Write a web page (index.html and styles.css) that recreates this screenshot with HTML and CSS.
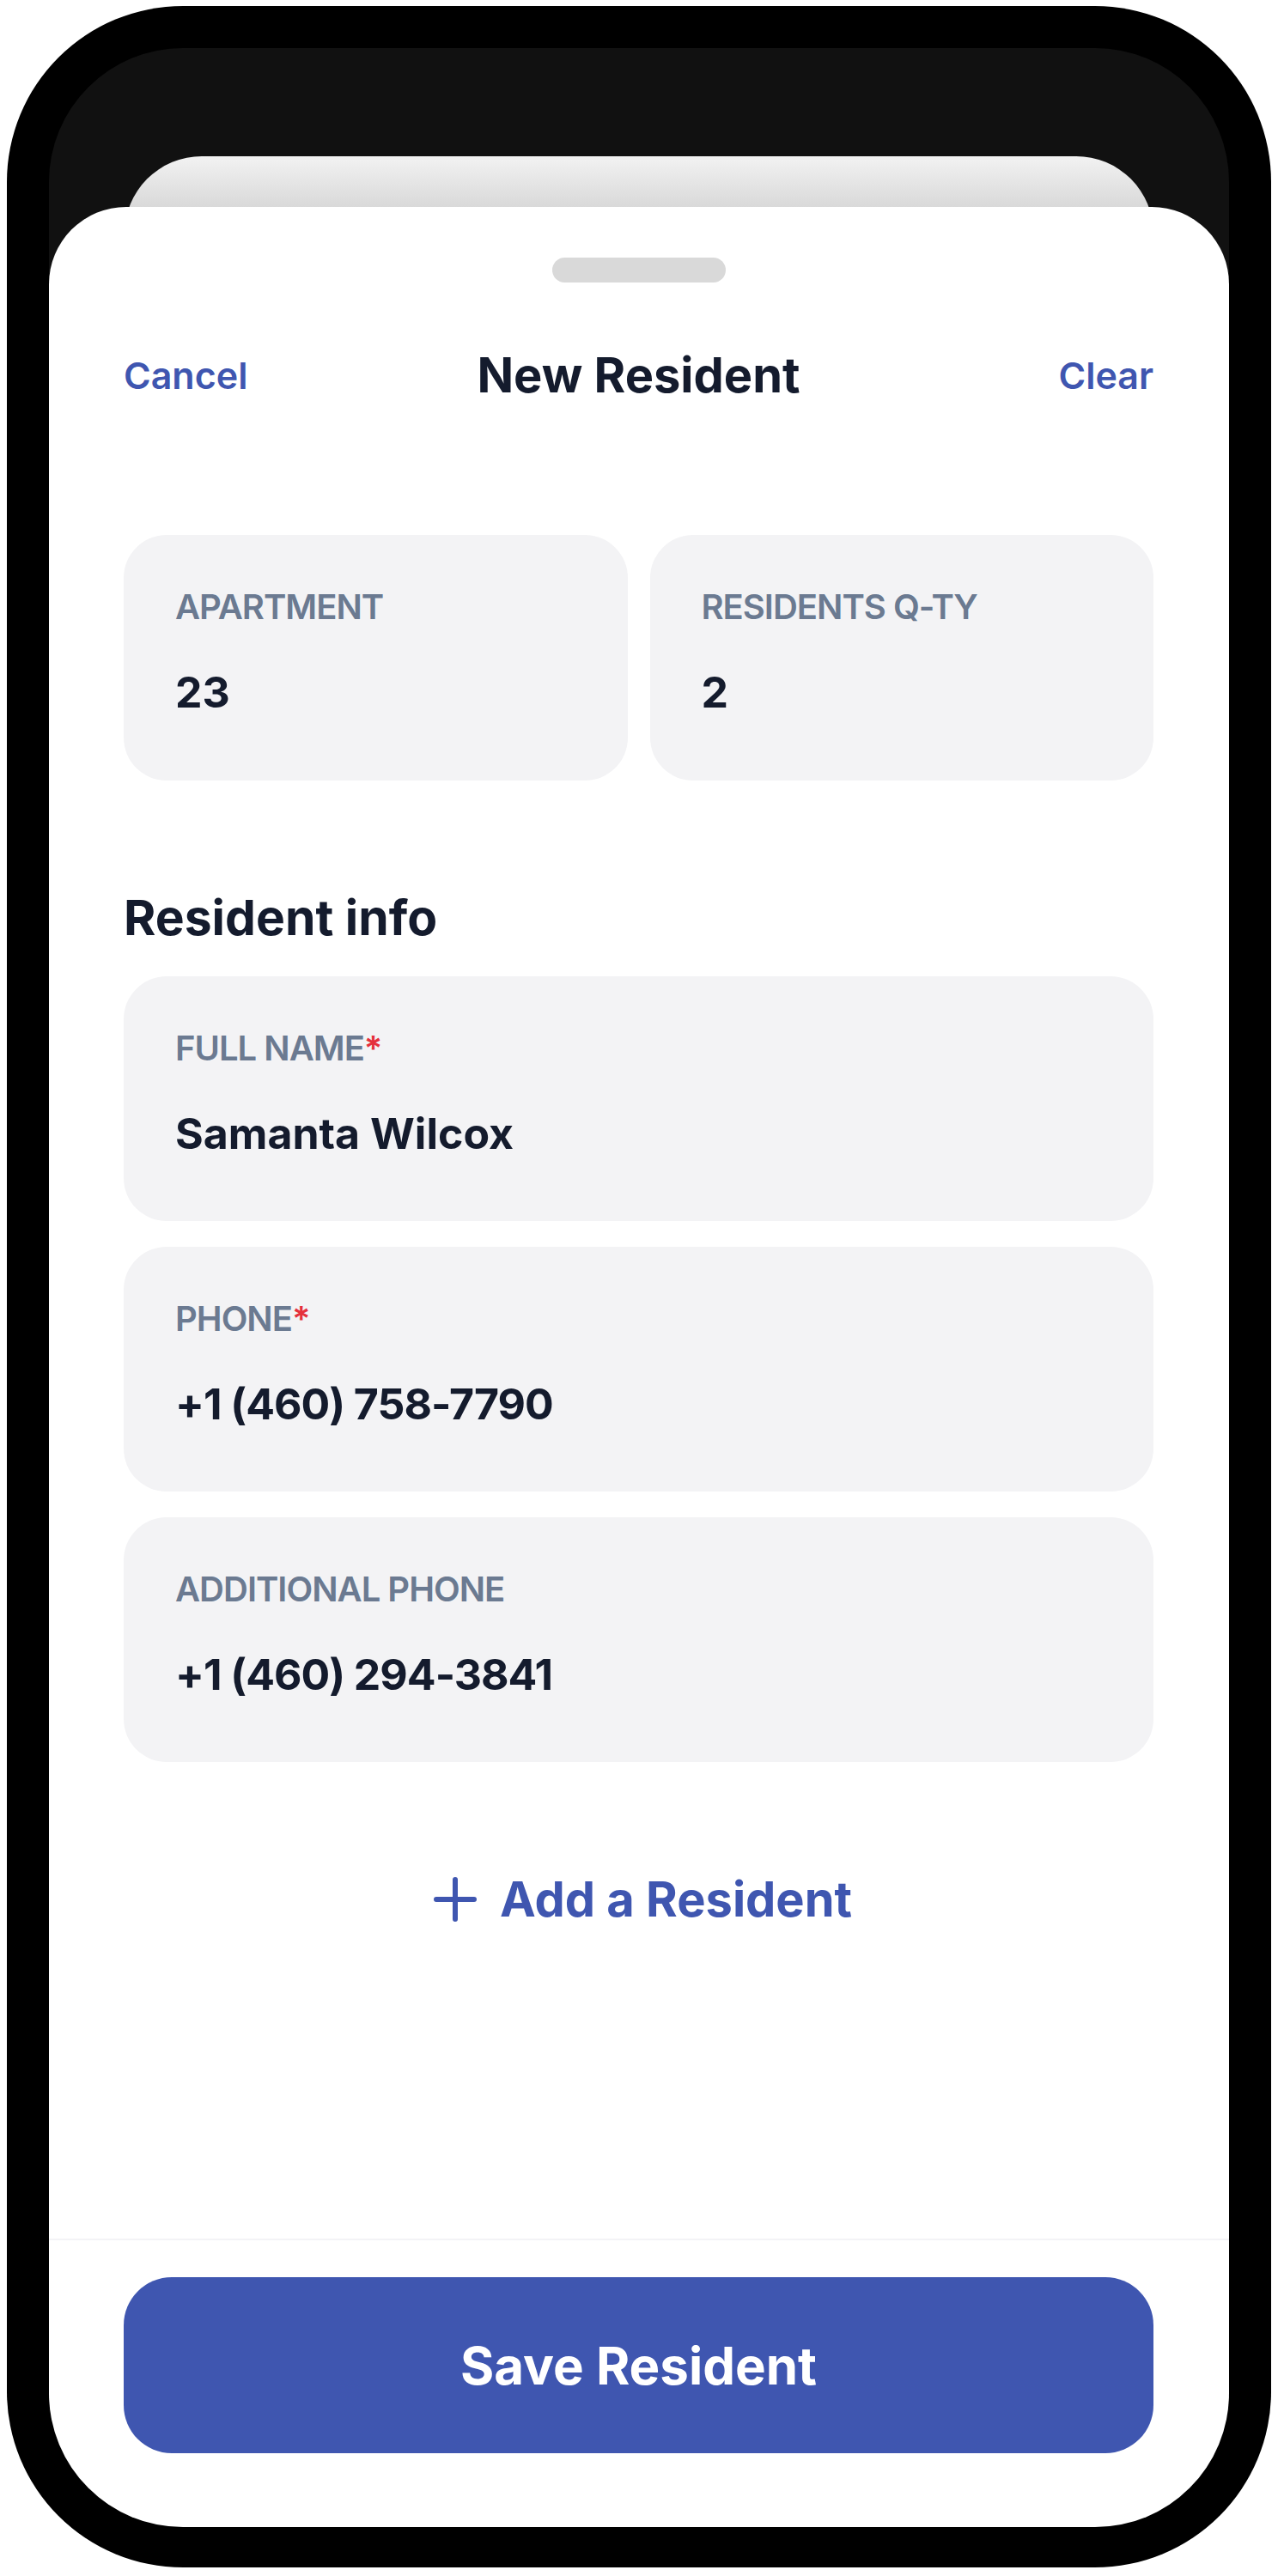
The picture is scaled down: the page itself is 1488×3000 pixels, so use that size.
FILE: index.html
```html
<!DOCTYPE html>
<html lang="en">
<head>
    <meta charset="UTF-8">
    <meta name="viewport" content="width=device-width, initial-scale=1.0">
    <title>New Resident</title>
    <link rel="stylesheet" href="styles.css">
</head>
<body>

    <div class="phone">
        <div class="screen">
            <div class="back-card"></div>

            <div class="sheet">
                <div class="handle"></div>

                <header class="nav">
                    <a class="nav-link" href="#">Cancel</a>
                    <h1 class="nav-title">New Resident</h1>
                    <a class="nav-link nav-link-right" href="#">Clear</a>
                </header>

                <main class="form">
                    <div class="summary">
                        <div class="field">
                            <div class="field-label">APARTMENT</div>
                            <div class="field-value">23</div>
                        </div>
                        <div class="field">
                            <div class="field-label">RESIDENTS Q-TY</div>
                            <div class="field-value">2</div>
                        </div>
                    </div>

                    <h2 class="section-title">Resident info</h2>

                    <div class="fields">
                        <div class="field">
                            <div class="field-label">FULL NAME<span class="required">*</span></div>
                            <div class="field-value">Samanta Wilcox</div>
                        </div>
                        <div class="field">
                            <div class="field-label">PHONE<span class="required">*</span></div>
                            <div class="field-value phone-number">+1 (460) 758-7790</div>
                        </div>
                        <div class="field">
                            <div class="field-label">ADDITIONAL PHONE</div>
                            <div class="field-value phone-number">+1 (460) 294-3841</div>
                        </div>
                    </div>

                    <button class="add-btn">
                        <svg class="add-icon" width="50" height="52" viewBox="0 0 50 52">
                            <path d="M25 3V49M3 26H47" fill="none" stroke="#3f56b0" stroke-width="6" stroke-linecap="round"/>
                        </svg>
                        Add a Resident
                    </button>
                </main>

                <footer class="sheet-footer">
                    <button class="save-btn">Save Resident</button>
                </footer>
            </div>
        </div>
    </div>

</body>
</html>
```

FILE: styles.css
```css
body {
    margin: 0;
    background-color: #ffffff;
    font-family: Inter, 'Noto Sans', sans-serif;
    color: #141b2d;
}

.phone {
    width: 1472px;
    height: 2983px;
    margin: 7px 8px;
    box-sizing: border-box;
    padding: 49px 49px 47px;
    background-color: #000000;
    border-radius: 205px;
}

.screen {
    height: 100%;
    display: flex;
    flex-direction: column;
    background-color: #111111;
    border-radius: 156px;
    overflow: hidden;
}

.back-card {
    height: 120px;
    margin: 126px 88px -61px;
    flex-shrink: 0;
    border-radius: 90px 90px 0 0;
    background: linear-gradient(#f2f2f2, #d9d9d9 59px);
}

.sheet {
    flex: 1;
    display: flex;
    flex-direction: column;
    background-color: #ffffff;
    border-radius: 90px 90px 0 0;
}

.handle {
    width: 202px;
    height: 29px;
    margin: 59px auto 0;
    border-radius: 15px;
    background-color: #d9d9d9;
}

.nav {
    display: grid;
    grid-template-columns: 1fr auto 1fr;
    align-items: center;
    height: 68px;
    margin-top: 74px;
    padding: 0 88px 0 87px;
}

.nav-link {
    font-size: 43px;
    font-weight: 600;
    color: #3f56b0;
    text-decoration: none;
}

.nav-link-right {
    justify-self: end;
}

.nav-title {
    margin: 0;
    font-size: 56px;
    line-height: 68px;
    font-weight: 700;
}

.form {
    display: flex;
    flex-direction: column;
    padding: 0 88px 0 87px;
}

.summary {
    display: grid;
    grid-template-columns: 1fr 1fr;
    gap: 26px;
    margin-top: 152px;
}

.field {
    padding: 60px 60px 72px;
    border-radius: 50px;
    background-color: #f3f3f5;
}

.summary .field {
    padding-bottom: 73px;
}

.field-label {
    font-size: 40px;
    line-height: 48px;
    font-weight: 600;
    letter-spacing: -1px;
    color: #6b7a91;
    margin-bottom: 45px;
}

.required {
    color: #e5303c;
}

.field-value {
    font-size: 50px;
    line-height: 60px;
    font-weight: 700;
}

.phone-number {
    letter-spacing: -1px;
}

.section-title {
    margin: 126px 0 0;
    font-size: 57px;
    line-height: 68px;
    font-weight: 700;
}

.fields {
    display: flex;
    flex-direction: column;
    gap: 30px;
    margin-top: 34px;
}

.add-btn {
    display: flex;
    align-items: center;
    justify-content: center;
    gap: 27px;
    margin-top: 127px;
    padding: 0 0 0 10px;
    border: none;
    background: none;
    font-family: inherit;
    font-size: 56px;
    line-height: 66px;
    font-weight: 700;
    color: #3f56b0;
}

.sheet-footer {
    margin-top: auto;
    padding: 43px 88px 86px 87px;
    border-top: 2px solid #f3f3f6;
}

.save-btn {
    width: 100%;
    height: 205px;
    border: none;
    border-radius: 56px;
    background-color: #3f56b0;
    color: #ffffff;
    font-family: inherit;
    font-size: 60px;
    font-weight: 700;
}
```
